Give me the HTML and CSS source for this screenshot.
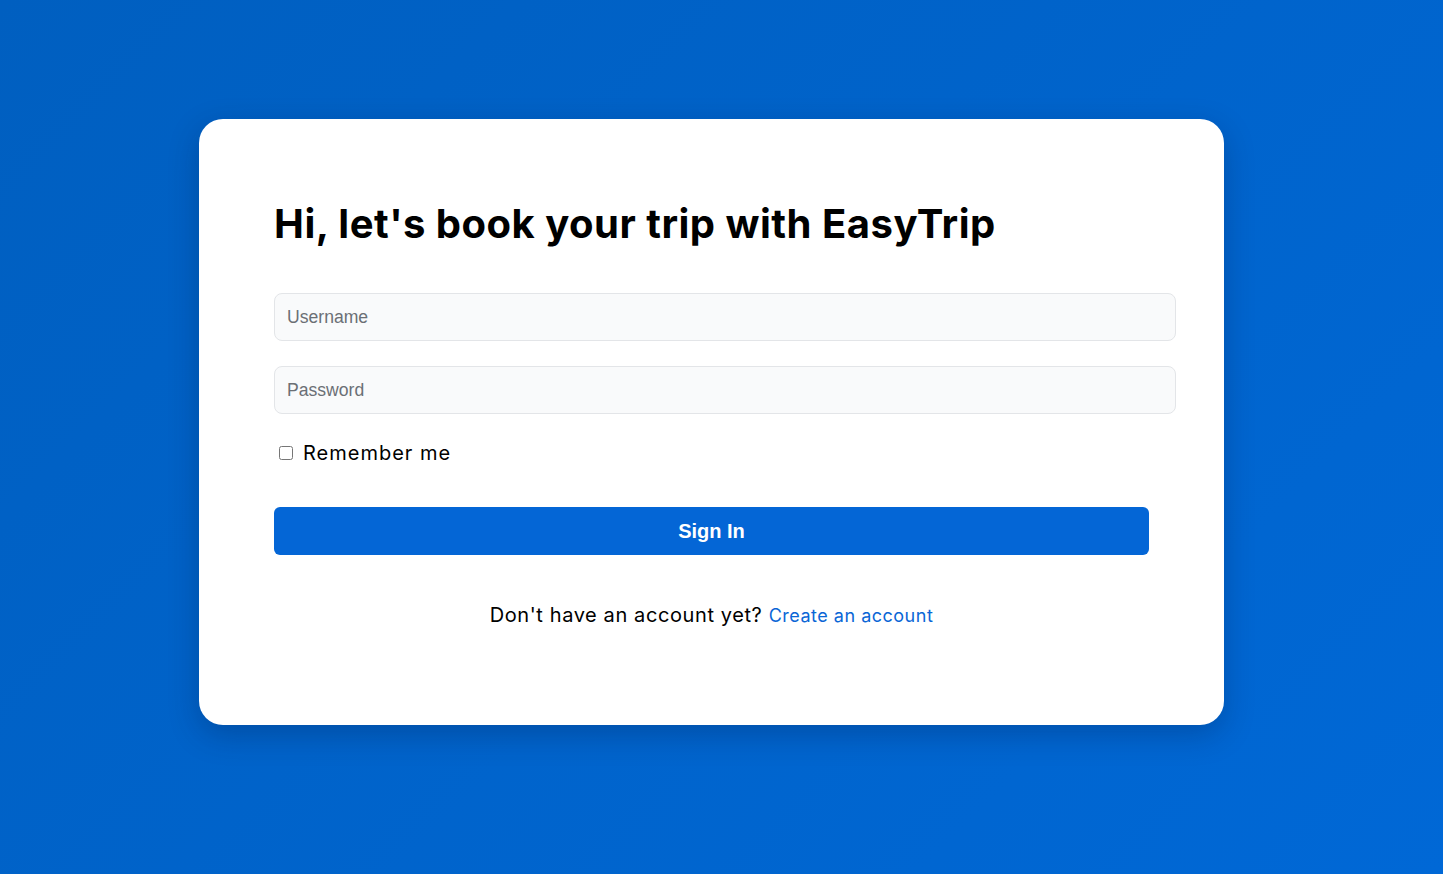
FILE: index.html
```html
<!DOCTYPE html>
<html lang="en">
<head>
<meta charset="utf-8">
<title>EasyTrip - Sign In</title>
<link rel="stylesheet" href="styles.css">
</head>
<body>
<main class="page">
  <section class="card">
    <h1 class="title">Hi, let's book your trip with EasyTrip</h1>
    <form class="form">
      <input class="field" type="text" placeholder="Username">
      <input class="field field-gap" type="password" placeholder="Password">
      <label class="remember"><input class="check" type="checkbox"> <span>Remember me</span></label>
      <button class="btn" type="button">Sign In</button>
    </form>
    <p class="footer">Don't have an account yet? <a class="link" href="#">Create an account</a></p>
  </section>
</main>
</body>
</html>
```
FILE: styles.css
```css
* { box-sizing: border-box; }
html, body { margin: 0; padding: 0; }
body {
  font-family: Inter, "Noto Sans", sans-serif;
  background: linear-gradient(135deg, #005fc0 0%, #0068d6 100%);
  min-height: 100vh;
}
.page {
  min-height: 874px;
  display: flex;
  align-items: center;
  justify-content: center;
  padding: 0 20px 30px 0;
}
.card {
  width: 1025px;
  height: 606px;
  background: #ffffff;
  border-radius: 24px;
  box-shadow: 0 10px 30px rgba(0, 20, 60, 0.25);
  padding: 75px 75px 0 75px;
}
.title {
  margin: 0;
  font-size: 40px;
  line-height: 60px;
  font-weight: 700;
  color: #000;
  letter-spacing: 0.5px;
}
.form {
  display: flex;
  flex-direction: column;
  margin-top: 39px;
}
.field {
  box-sizing: content-box;
  width: 100%;
  height: 46px;
  padding: 0 13px 0 12px;
  border: 1px solid #e3e5e8;
  border-radius: 8px;
  background: #f9fafb;
  font-family: "Liberation Sans", Arial, sans-serif;
  font-size: 17.6px;
  color: #333;
  outline: none;
}
.field::placeholder { color: #6b6f75; }
.field-gap { margin-top: 25px; }
.remember {
  display: flex;
  align-items: center;
  margin-top: 24px;
  height: 30px;
  font-size: 20px;
  letter-spacing: 1px;
  color: #000;
}
.check {
  width: 14px;
  height: 14px;
  margin: 0 10px 0 5px;
}
.btn {
  margin-top: 39px;
  height: 48px;
  width: 100%;
  border: none;
  border-radius: 6px;
  background: #0466d6;
  color: #fff;
  font-family: "Liberation Sans", Arial, sans-serif;
  font-weight: 700;
  font-size: 20px;
  line-height: 46px;
  cursor: pointer;
}
.footer {
  margin: 45px 0 0 0;
  line-height: 30px;
  text-align: center;
  font-size: 20px;
  letter-spacing: 0.6px;
  color: #000;
}
.link {
  color: #0a66d6;
  font-size: 18px;
  letter-spacing: 0.5px;
  text-decoration: none;
}
```
